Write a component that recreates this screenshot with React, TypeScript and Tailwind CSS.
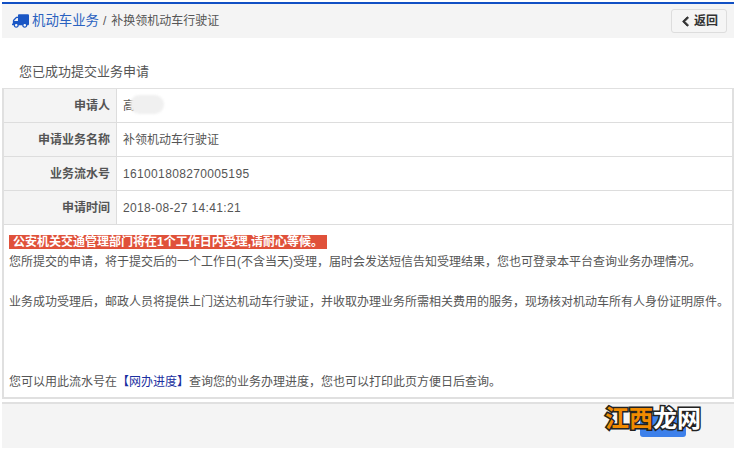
import { FaTruck, FaChevronLeft } from "react-icons/fa";

const font = "font-['Liberation_Sans','Noto_Sans_CJK_SC',sans-serif]";

const rows = [
  { label: "申请人", value: "高", spacing: "" },
  { label: "申请业务名称", value: "补领机动车行驶证", spacing: "" },
  { label: "业务流水号", value: "161001808270005195", spacing: "tracking-[0.35px]" },
  { label: "申请时间", value: "2018-08-27 14:41:21", spacing: "tracking-[0.35px]" },
];

export default function App() {
  return (
    <div className={`relative h-[450px] w-[738px] overflow-hidden bg-white pl-[2px] pr-[4px] pt-[2px] text-[12px] text-[#555] ${font}`}>
      <div className="flex h-[36px] items-center justify-between border-t-[2px] border-[#1150c4] bg-[#f4f4f4] pl-[10px] pr-[7px]">
        <div className="flex items-center">
          <FaTruck className="mr-[3px] h-[16px] w-[17px] -scale-x-100 text-[#1a56c4]" />
          <span className="text-[13.4px] text-[#2a62c0]">机动车业务</span>
          <span className="ml-[4px] text-[#555]">/</span>
          <span className="ml-[5px] text-[#555]">补换领机动车行驶证</span>
        </div>
        <button className="flex h-[24px] w-[56px] items-center justify-center rounded-[3px] border border-[#ddd] bg-[#f5f5f5] text-[12px] font-bold text-[#333]">
          <FaChevronLeft className="mr-[3px] h-[11px] w-[11px] stroke-[40px]" />
          返回
        </button>
      </div>

      <p className="pb-[7px] pl-[17px] pt-[25px] text-[13px] leading-[18px]">您已成功提交业务申请</p>

      <div className="border-2 border-[#e0e0e0] border-t-[1px]">
        {rows.map((row) => (
          <div key={row.label} className="flex h-[34px] border-b border-[#ddd] last:h-[33px]">
            <div className="flex w-[113px] shrink-0 items-center justify-end border-r border-[#ddd] bg-[#f4f4f4] pr-[6px] pt-[1px] font-bold">
              {row.label}
            </div>
            <div className={`flex items-center pl-[6px] pt-[1px] ${row.spacing}`}>{row.value}</div>
          </div>
        ))}
        <div className="h-[172px] pl-[5px] pt-[10px] text-[12px] leading-[16px]">
          <div className="flex h-[14px] w-[318px] items-center bg-[#e0513a] pl-[4px] text-[12px] font-bold leading-[14px] text-white">
            公安机关交通管理部门将在1个工作日内受理,请耐心等候。
          </div>
          <p className="mt-[5px] whitespace-nowrap">
            您所提交的申请，将于提交后的一个工作日(不含当天)受理，届时会发送短信告知受理结果，您也可登录本平台查询业务办理情况。
          </p>
          <p className="mt-[24px] whitespace-nowrap">
            业务成功受理后，邮政人员将提供上门送达机动车行驶证，并收取办理业务所需相关费用的服务，现场核对机动车所有人身份证明原件。
          </p>
          <p className="mt-[64px] whitespace-nowrap">
            您可以用此流水号在<span className="text-[#1a2fa0]">【网办进度】</span>查询您的业务办理进度，您也可以打印此页方便日后查询。
          </p>
        </div>
      </div>

      <div className="relative mt-[3px] h-[46px] border-t-2 border-[#e0e0e0] bg-[#f4f4f4]">
        <div className="absolute left-[638px] top-[11px] h-[22px] w-[46px] rounded-[3px] bg-[#3d80ea]" />
      </div>

      <div className="absolute left-[130px] top-[95px] h-[19px] w-[34px] rounded-full bg-[#f0f0f0] blur-[1px]" />
      <div className="absolute left-[605px] top-[404px] flex text-[24px] font-bold leading-[30px] [-webkit-text-stroke:3px_#222] [paint-order:stroke_fill]">
        <span className="text-[#f08a00]">江西</span>
        <span className="text-white">龙网</span>
      </div>
    </div>
  );
}
